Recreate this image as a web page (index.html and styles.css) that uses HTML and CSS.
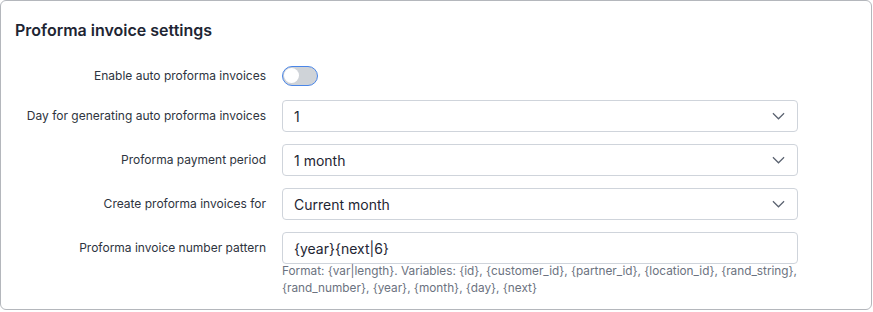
FILE: index.html
```html
<!DOCTYPE html>
<html lang="en">
<head>
    <meta charset="UTF-8">
    <meta name="viewport" content="width=device-width, initial-scale=1.0">
    <title>Proforma invoice settings</title>
    <link rel="stylesheet" href="styles.css">
</head>
<body>
    <div class="card">
        <h3 class="card-title">Proforma invoice settings</h3>

        <!-- Settings rows -->
        <div class="form-row toggle-row">
            <label class="form-label">Enable auto proforma invoices</label>
            <div class="form-control-wrap">
                <span class="switch"><span class="knob"></span></span>
            </div>
        </div>

        <div class="form-row">
            <label class="form-label">Day for generating auto proforma invoices</label>
            <div class="form-control-wrap">
                <div class="select">
                    <span>1</span>
                    <svg class="chevron" viewBox="0 0 14 8" width="13" height="8"><path d="M1 1l6 6 6-6" fill="none" stroke="#5a6270" stroke-width="1.3"/></svg>
                </div>
            </div>
        </div>

        <div class="form-row">
            <label class="form-label">Proforma payment period</label>
            <div class="form-control-wrap">
                <div class="select">
                    <span>1 month</span>
                    <svg class="chevron" viewBox="0 0 14 8" width="13" height="8"><path d="M1 1l6 6 6-6" fill="none" stroke="#5a6270" stroke-width="1.3"/></svg>
                </div>
            </div>
        </div>

        <div class="form-row">
            <label class="form-label">Create proforma invoices for</label>
            <div class="form-control-wrap">
                <div class="select">
                    <span>Current month</span>
                    <svg class="chevron" viewBox="0 0 14 8" width="13" height="8"><path d="M1 1l6 6 6-6" fill="none" stroke="#5a6270" stroke-width="1.3"/></svg>
                </div>
            </div>
        </div>

        <div class="form-row">
            <label class="form-label">Proforma invoice number pattern</label>
            <div class="form-control-wrap">
                <div class="input">{year}{next|6}</div>
                <div class="help-text">Format: {var|length}. Variables: {id}, {customer_id}, {partner_id}, {location_id}, {rand_string}, {rand_number}, {year}, {month}, {day}, {next}</div>
            </div>
        </div>
    </div>
</body>
</html>
```

FILE: styles.css
```css
body {
    margin: 0;
    padding: 0;
    font-family: Inter, "Noto Sans", sans-serif;
    background: #ffffff;
    color: #1e2533;
}
.card {
    width: 872px;
    height: 310px;
    box-sizing: border-box;
    border: 1px solid #b4b7bc;
    border-radius: 6px;
    padding: 19px 14px 0 14px;
}
.card-title {
    margin: 0 0 25px 0;
    font-size: 16px;
    font-weight: 600;
    line-height: 20px;
    color: #1e2533;
}
.form-row {
    display: flex;
    align-items: flex-start;
    margin-bottom: 12px;
}
.form-label {
    width: 251px;
    flex-shrink: 0;
    text-align: right;
    font-size: 12px;
    line-height: 32px;
    color: #2e3440;
    padding-right: 16px;
}
.toggle-row {
    margin-bottom: 13px;
}
.toggle-row .form-label {
    line-height: 22px;
}
.form-control-wrap {
    width: 516px;
}
.switch {
    display: block;
    width: 36px;
    height: 20px;
    box-sizing: border-box;
    border: 1.5px solid #4a86e8;
    border-radius: 11px;
    background: #cfd3d8;
    position: relative;
    margin-top: 1px;
}
.knob {
    position: absolute;
    left: 1px;
    top: 1px;
    width: 15px;
    height: 15px;
    border-radius: 50%;
    background: #ffffff;
}
.select, .input {
    height: 32px;
    box-sizing: border-box;
    border: 1px solid #cfd4db;
    border-radius: 4px;
    padding: 0 12px 0 11px;
    display: flex;
    align-items: center;
    justify-content: space-between;
    font-size: 14px;
    color: #1e2533;
}
.help-text {
    font-size: 11.8px;
    line-height: 17px;
    color: #6b7280;
    margin-top: -1px;
}
```
